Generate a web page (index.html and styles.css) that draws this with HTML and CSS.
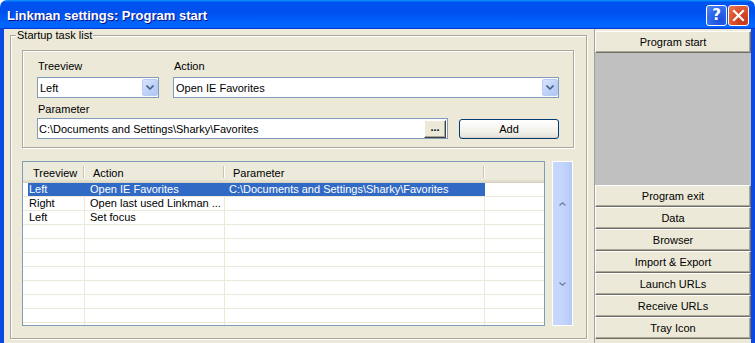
FILE: index.html
```html
<!DOCTYPE html>
<html>
<head>
<meta charset="utf-8">
<link rel="stylesheet" href="styles.css">
</head>
<body>
<div class="window">
  <div class="titlebar">
    <span class="title">Linkman settings: Program start</span>
    <div class="tb-buttons">
      <div class="tb-btn tb-help">?</div>
      <div class="tb-btn tb-close">
        <svg width="19" height="19" viewBox="0 0 19 19"><path d="M5 5 L14 14 M14 5 L5 14" stroke="#fff" stroke-width="2.2" stroke-linecap="square" fill="none"/></svg>
      </div>
    </div>
  </div>
  <div class="client">
    <div class="main">
      <div class="group">
        <span class="legend">Startup task list</span>
        <div class="panel">
          <div class="row1">
            <div class="field">
              <label>Treeview</label>
              <div class="combo combo-tree">Left<span class="dd"><svg width="8" height="5" viewBox="0 0 8 5"><path d="M0.5 0.5 L4 4 L7.5 0.5" stroke="#4D6185" stroke-width="1.6" fill="none"/></svg></span></div>
            </div>
            <div class="field">
              <label>Action</label>
              <div class="combo combo-action">Open IE Favorites<span class="dd"><svg width="8" height="5" viewBox="0 0 8 5"><path d="M0.5 0.5 L4 4 L7.5 0.5" stroke="#4D6185" stroke-width="1.6" fill="none"/></svg></span></div>
            </div>
          </div>
          <div class="field field-param">
            <label>Parameter</label>
            <div class="row2">
              <div class="input">C:\Documents and Settings\Sharky\Favorites<span class="browse">...</span></div>
              <div class="add">Add</div>
            </div>
          </div>
        </div>
        <div class="listrow">
          <div class="list">
            <div class="hdr">
              <div class="h h1">Treeview</div>
              <div class="h h2">Action</div>
              <div class="h h3">Parameter</div>
              <div class="h h4"></div>
            </div>
            <div class="r sel"><div class="c c1">Left</div><div class="c c2">Open IE Favorites</div><div class="c c3">C:\Documents and Settings\Sharky\Favorites</div><div class="c c4"></div></div>
            <div class="r"><div class="c c1">Right</div><div class="c c2">Open last used Linkman ...</div><div class="c c3"></div><div class="c c4"></div></div>
            <div class="r"><div class="c c1">Left</div><div class="c c2">Set focus</div><div class="c c3"></div><div class="c c4"></div></div>
            <div class="r"><div class="c c1"></div><div class="c c2"></div><div class="c c3"></div><div class="c c4"></div></div>
            <div class="r"><div class="c c1"></div><div class="c c2"></div><div class="c c3"></div><div class="c c4"></div></div>
            <div class="r"><div class="c c1"></div><div class="c c2"></div><div class="c c3"></div><div class="c c4"></div></div>
            <div class="r"><div class="c c1"></div><div class="c c2"></div><div class="c c3"></div><div class="c c4"></div></div>
            <div class="r"><div class="c c1"></div><div class="c c2"></div><div class="c c3"></div><div class="c c4"></div></div>
            <div class="r"><div class="c c1"></div><div class="c c2"></div><div class="c c3"></div><div class="c c4"></div></div>
            <div class="r"><div class="c c1"></div><div class="c c2"></div><div class="c c3"></div><div class="c c4"></div></div>
            <div class="r"><div class="c c1"></div><div class="c c2"></div><div class="c c3"></div><div class="c c4"></div></div>
          </div>
          <div class="scroll">
            <svg width="7" height="4" viewBox="0 0 7 4"><path d="M0.5 3.5 L3.5 0.8 L6.5 3.5" stroke="#6d7fa5" stroke-width="1.3" fill="none"/></svg>
            <svg width="7" height="4" viewBox="0 0 7 4"><path d="M0.5 0.5 L3.5 3.2 L6.5 0.5" stroke="#6d7fa5" stroke-width="1.3" fill="none"/></svg>
          </div>
        </div>
      </div>
    </div>
    <div class="side">
      <div class="sbtn">Program start</div>
      <div class="side-gap"></div>
      <div class="sbtn">Program exit</div>
      <div class="sbtn">Data</div>
      <div class="sbtn">Browser</div>
      <div class="sbtn">Import &amp; Export</div>
      <div class="sbtn">Launch URLs</div>
      <div class="sbtn">Receive URLs</div>
      <div class="sbtn">Tray Icon</div>
    </div>
  </div>
</div>
</body>
</html>
```
FILE: styles.css
```css
* { box-sizing: border-box; }
html, body { margin: 0; padding: 0; }
body {
  width: 755px;
  height: 343px;
  overflow: hidden;
  background: #fff;
  font-family: "Liberation Sans", Arial, sans-serif;
  font-size: 11px;
  color: #000;
}
.window {
  width: 755px;
  height: 343px;
  display: flex;
  flex-direction: column;
}
.titlebar {
  height: 29px;
  flex: none;
  display: flex;
  align-items: center;
  justify-content: space-between;
  padding: 0 6px 0 7px;
  border-radius: 7px 7px 0 0;
  background: linear-gradient(180deg, #0997ff, #0053ee 8%, #0050ee 40%, #0066ff 88%, #0066ff 93%, #005bff 95%, #003dd7 96%, #003dd7);
}
.title {
  color: #fff;
  font-family: "Liberation Sans", Arial, sans-serif;
  font-weight: bold;
  font-size: 13px;
  text-shadow: 1px 1px 0 #0f1089;
  margin-top: 1px;
}
.tb-buttons {
  display: flex;
  gap: 1px;
  margin-top: 2px;
}
.tb-btn {
  width: 21px;
  height: 21px;
  border: 1px solid #fff;
  border-radius: 3px;
  display: flex;
  align-items: center;
  justify-content: center;
}
.tb-help {
  background: radial-gradient(circle at 70% 75%, #1c4ed8 0%, #2a63ea 45%, #4d86f5 100%);
  color: #fff;
  font-family: "DejaVu Sans", sans-serif;
  font-weight: bold;
  font-size: 15px;
  line-height: 19px;
}
.tb-close {
  background: radial-gradient(circle at 75% 80%, #c3381a 0%, #d94a25 45%, #ec7a56 100%);
}
.client {
  flex: 1;
  display: flex;
  background: #ece9d8;
  border-left: 4px solid #0a49e2;
  border-right: 4px solid #0a49e2;
}
.main {
  width: 590px;
  flex: none;
  padding: 6px 0 0 6px;
}
.group {
  position: relative;
  width: 577px;
  height: 304px;
  border: 1px solid #aca899;
  box-shadow: inset 1px 1px 0 #fff, 1px 1px 0 #fff;
  padding: 14px 0 0 11px;
}
.legend {
  position: absolute;
  left: 5px;
  top: -7px;
  padding: 0 1px;
  background: #ece9d8;
  line-height: 13px;
}
.panel {
  width: 552px;
  height: 98px;
  border: 1px solid #aca899;
  box-shadow: inset 1px 1px 0 #fff, 1px 1px 0 #fff;
  padding: 9px 0 0 14px;
}
.row1 {
  display: flex;
  gap: 14px;
}
.field label {
  display: block;
  height: 13px;
  line-height: 13px;
  padding-left: 1px;
  margin-bottom: 4px;
}
.field-param {
  margin-top: 5px;
}
.field-param label {
  margin-bottom: 2px;
}
.combo {
  position: relative;
  height: 21px;
  border: 1px solid #7f9db9;
  background: #fff;
  display: flex;
  align-items: center;
  padding-left: 2px;
}
.combo-tree { width: 122px; }
.combo-action { width: 386px; }
.dd {
  position: absolute;
  right: 0;
  top: 1px;
  width: 16px;
  height: 17px;
  border: 1px solid #b9caf3;
  border-radius: 2px;
  background: linear-gradient(135deg, #dbe5fd 0%, #c1d3fb 50%, #b0c6f6 100%);
  display: flex;
  align-items: center;
  justify-content: center;
}
.row2 {
  display: flex;
  align-items: flex-start;
}
.input {
  position: relative;
  width: 411px;
  height: 21px;
  border: 1px solid #7f9db9;
  background: #fff;
  display: flex;
  align-items: center;
  padding-left: 1px;
}
.browse {
  position: absolute;
  right: 1px;
  top: 1px;
  width: 22px;
  height: 18px;
  background: #ece9d8;
  border: 1px solid;
  border-color: #fff #404040 #404040 #fff;
  box-shadow: inset -1px -1px 0 #aca899;
  font-weight: bold;
  font-size: 11px;
  line-height: 13px;
  text-align: center;
}
.add {
  margin-left: 11px;
  margin-top: 1px;
  width: 100px;
  height: 20px;
  border: 1px solid #003c74;
  border-radius: 3px;
  background: linear-gradient(180deg, #ffffff 0%, #f3f2ec 60%, #e4e2d8 100%);
  box-shadow: inset 0 -1px 0 #d6d0c5;
  display: flex;
  align-items: center;
  justify-content: center;
}
.listrow {
  display: flex;
  margin-top: 13px;
}
.list {
  width: 523px;
  height: 165px;
  border: 1px solid #7f9db9;
  background: #fff;
  overflow: hidden;
}
.hdr {
  display: grid;
  grid-template-columns: 62px 140px 260px 1fr;
  height: 21px;
  background: #ebeadb;
  border-bottom: 1px solid #d6d2c2;
  box-shadow: inset 0 -2px 0 #e2decd;
}
.h {
  position: relative;
  display: flex;
  align-items: center;
  padding-top: 1px;
  padding-left: 8px;
}
.h1 { padding-left: 10px; }
.h1::after, .h2::after, .h3::after {
  content: "";
  position: absolute;
  right: 1px;
  top: 4px;
  bottom: 4px;
  width: 1px;
  background: #c7c5b2;
  box-shadow: 1px 0 0 #fff;
}
.r {
  display: grid;
  grid-template-columns: 62px 140px 260px 1fr;
  height: 14px;
  border-bottom: 1px solid #ece9d8;
}
.c {
  height: 13px;
  line-height: 13px;
  white-space: nowrap;
  overflow: hidden;
  border-right: 1px solid #ece9d8;
}
.c4 { border-right: none; }
.c1 { padding-left: 6px; }
.c2 { padding-left: 5px; }
.c3 { padding-left: 4px; }
.sel .c1, .sel .c2, .sel .c3 {
  color: #fff;
  background: #316ac5;
  border-right-color: #316ac5;
}
.sel .c1 {
  background: linear-gradient(to right, #fff 5px, #316ac5 5px);
}
.scroll {
  margin-left: 7px;
  width: 21px;
  height: 165px;
  border: 1px solid #fff;
  background: linear-gradient(to right, #c9d7fc 0%, #c3d4fb 55%, #b6caf7 100%);
  display: flex;
  flex-direction: column;
  align-items: center;
  padding-top: 40px;
  gap: 76px;
}
.side {
  width: 157px;
  flex: none;
  border-left: 1px solid #a0a0a0;
  display: flex;
  flex-direction: column;
  padding-top: 2px;
}
.sbtn {
  height: 22px;
  flex: none;
  display: flex;
  align-items: center;
  justify-content: center;
  background: #ece9d8;
  border: 1px solid;
  border-color: #fff #716f64 #716f64 #fff;
  box-shadow: inset -1px -1px 0 #aca899;
  color: #000;
}
.side-gap {
  height: 132px;
  flex: none;
  background: #c0c0c0;
}
```
